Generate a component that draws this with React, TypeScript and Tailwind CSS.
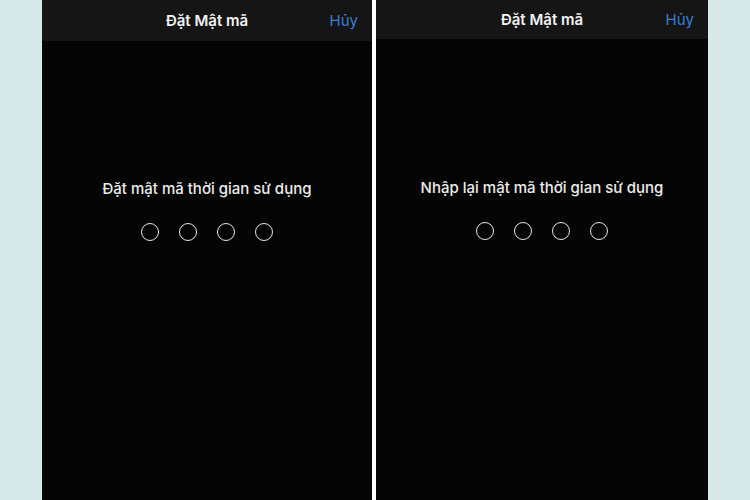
import React from "react";

const font = { fontFamily: "Inter, 'Noto Sans', sans-serif" };

function Dots() {
  return (
    <div className="flex gap-[20px]">
      {[0, 1, 2, 3].map((i) => (
        <div key={i} className="h-[18px] w-[18px] rounded-full border-[1.5px] border-[#e6e6e6]" />
      ))}
    </div>
  );
}

function Screen({ prompt, width, headerH, promptTop }: { prompt: string; width: string; headerH: string; promptTop: string }) {
  return (
    <div className={`${width} flex h-full flex-col bg-[#050505]`}>
      <div className={`${headerH} relative flex items-center justify-center bg-[#151515] pt-[2px]`}>
        <span className="text-[15px] font-semibold text-[#f2f2f2]">Đặt Mật mã</span>
        <span className="absolute right-[14px] text-[15px] text-[#3a7fd8]">Hủy</span>
      </div>
      <div className={`flex flex-col items-center ${promptTop}`}>
        <span className="text-[15px] font-medium leading-[20px] text-[#ececec]">{prompt}</span>
        <div className="mt-[24px]">
          <Dots />
        </div>
      </div>
    </div>
  );
}

export default function App() {
  return (
    <div className="flex h-[500px] w-[750px] bg-[#d7e9e8]" style={font}>
      <div className="w-[42px]" />
      <Screen prompt="Đặt mật mã thời gian sử dụng" width="w-[330px]" headerH="h-[41px]" promptTop="pt-[138px]" />
      <div className="w-[4px] bg-white" />
      <Screen prompt="Nhập lại mật mã thời gian sử dụng" width="w-[332px]" headerH="h-[39px]" promptTop="pt-[139px]" />
      <div className="w-[42px]" />
    </div>
  );
}
